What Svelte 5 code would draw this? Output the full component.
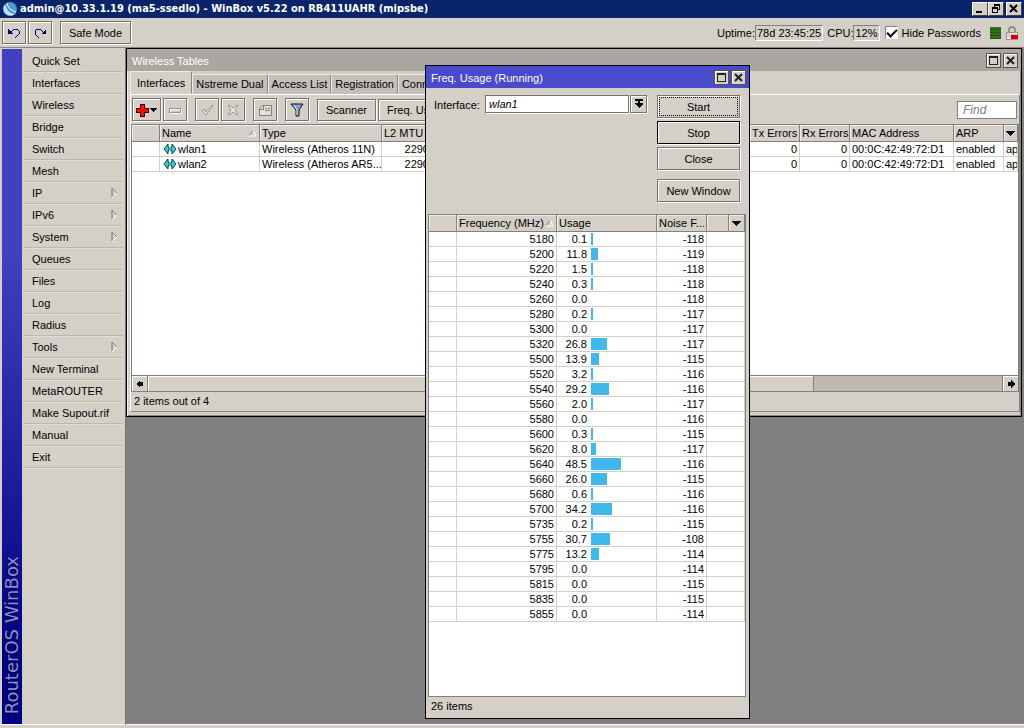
<script>
  const menu = [
    { label: 'Quick Set' },
    { label: 'Interfaces' },
    { label: 'Wireless' },
    { label: 'Bridge' },
    { label: 'Switch' },
    { label: 'Mesh' },
    { label: 'IP', sub: true },
    { label: 'IPv6', sub: true },
    { label: 'System', sub: true },
    { label: 'Queues' },
    { label: 'Files' },
    { label: 'Log' },
    { label: 'Radius' },
    { label: 'Tools', sub: true },
    { label: 'New Terminal' },
    { label: 'MetaROUTER' },
    { label: 'Make Supout.rif' },
    { label: 'Manual' },
    { label: 'Exit' }
  ];

  const tabs = ['Interfaces', 'Nstreme Dual', 'Access List', 'Registration', 'Connect List'];

  const wlans = [
    { name: 'wlan1', type: 'Wireless (Atheros 11N)', mtu: 2290, tx: 0, rx: 0, mac: '00:0C:42:49:72:D1', arp: 'enabled', mode: 'ap' },
    { name: 'wlan2', type: 'Wireless (Atheros AR5...', mtu: 2290, tx: 0, rx: 0, mac: '00:0C:42:49:72:D1', arp: 'enabled', mode: 'ap' }
  ];

  // frequency, usage %, noise floor
  const freqs = [
    [5180, 0.1, -118],
    [5200, 11.8, -119],
    [5220, 1.5, -118],
    [5240, 0.3, -118],
    [5260, 0, -118],
    [5280, 0.2, -117],
    [5300, 0, -117],
    [5320, 26.8, -117],
    [5500, 13.9, -115],
    [5520, 3.2, -116],
    [5540, 29.2, -116],
    [5560, 2, -117],
    [5580, 0, -116],
    [5600, 0.3, -115],
    [5620, 8, -117],
    [5640, 48.5, -116],
    [5660, 26, -115],
    [5680, 0.6, -116],
    [5700, 34.2, -116],
    [5735, 0.2, -115],
    [5755, 30.7, -108],
    [5775, 13.2, -114],
    [5795, 0, -114],
    [5815, 0, -115],
    [5835, 0, -115],
    [5855, 0, -114]
  ];

  let activeTab = 'Interfaces';
  let iface = 'wlan1';
  let find = '';
  let hidePasswords = true;

  function barWidth(usage) {
    return usage ? Math.max(2, Math.round(usage * 0.61)) : 0;
  }
</script>

<div class="app">
  <header class="titlebar">
    <svg class="smooth" width="16" height="16" viewBox="0 0 16 16">
      <circle cx="8" cy="8" r="7" fill="#4f9bd6" />
      <path d="M3 3a8 8 0 0 0 11 9a7 7 0 0 1-11-9z" fill="#b9ddf5" />
      <path d="M5 2q1 7 9 9M3 5q2 7 8 9" fill="none" stroke="#fff" />
    </svg>
    <h1>admin@10.33.1.19 (ma5-ssedlo) - WinBox v5.22 on RB411UAHR (mipsbe)</h1>
    <div class="sys">
      <button aria-label="Minimize"><svg width="10" height="10" viewBox="0 0 10 10"><path d="M1 7h6v2H1z" /></svg></button>
      <button aria-label="Restore">
        <svg width="10" height="10" viewBox="0 0 10 10"><path d="M3 0h6v6H7V5h1V2H4v1H3zM1 3h6v6H1zM2 5v3h4V5z" fill-rule="evenodd" /></svg>
      </button>
      <button class="quit" aria-label="Quit"><svg class="smooth" width="10" height="10" viewBox="0 0 10 10"><path d="M1 1l7 7M8 1L1 8" stroke="#000" stroke-width="2" /></svg></button>
    </div>
  </header>

  <div class="toolbar">
    <button class="btn sq" aria-label="Undo">
      <svg width="14" height="14" viewBox="0 0 14 14"><path d="M1 3v5h5z" fill="#00007c" /><path d="M4 6l3-3h3l2 2v3l-3 3H8" fill="none" stroke="#00007c" /></svg>
    </button>
    <button class="btn sq" aria-label="Redo">
      <svg width="14" height="14" viewBox="0 0 14 14"><path d="M13 3v5H8z" fill="#00007c" /><path d="M10 6L7 3H4L2 5v3l3 3h1" fill="none" stroke="#00007c" /></svg>
    </button>
    <button class="btn safe">Safe Mode</button>
    <div class="status">
      <span>Uptime:</span><span class="sunken">78d 23:45:25</span>
      <span class="cpu">CPU:</span><span class="sunken">12%</span>
      <label><input type="checkbox" bind:checked={hidePasswords} />Hide Passwords</label>
      <span class="load"></span>
      <svg width="14" height="16" viewBox="0 0 14 16">
        <path d="M4 7V4l2-2h2l2 2v3" fill="none" stroke="#98948d" stroke-width="2" />
        <path d="M1 7h11v7H1z" fill="#f0ede6" stroke="#98948d" />
        <path d="M2 9h9M2 11h5" stroke="#c4c0b8" />
        <path d="M6 10h7v4H6z" fill="#d40000" />
      </svg>
    </div>
  </div>

  <div class="work">
    <aside>
      <div class="brand"><span>RouterOS WinBox</span></div>
      <nav>
        {#each menu as item}
          <button>
            {item.label}
            {#if item.sub}
              <svg class="smooth" width="7" height="12" viewBox="0 0 7 12"><path d="M1 10V1" stroke="#77736d" /><path d="M1 1l5 5" stroke="#8f8b84" /><path d="M6 6l-5 5" stroke="#fff" /></svg>
            {/if}
          </button>
        {/each}
      </nav>
    </aside>

    <main>
      <section class="window tables">
        <div class="caption">
          <h2>Wireless Tables</h2>
          {@render winButtons()}
        </div>
        <div class="tabs">
          {#each tabs as tab}
            <button class:active={tab === activeTab} on:click={() => (activeTab = tab)}>{tab}</button>
          {/each}
        </div>
        <div class="page">
          <div class="tools">
            <button class="btn add" aria-label="Add">
              <svg width="24" height="14" viewBox="0 0 24 14"><path d="M5 1h4v4h4v4H9v4H5V9H1V5h4z" fill="#f01010" stroke="#400" /><path d="M15 5h7l-3 4h-1z" /></svg>
            </button>
            <button class="btn sq" aria-label="Remove">
              <svg width="14" height="14" viewBox="0 0 14 14"><path d="M2 6h11v4H2z" fill="none" stroke="#fff" /><path d="M1 5h11v4H1z" fill="none" stroke="#96928b" /></svg>
            </button>
            <button class="btn sq gap" aria-label="Enable">
              <svg class="smooth" width="14" height="14" viewBox="0 0 14 14"><path d="M2 8l2-2 2 3 6-7 1 1-7 9z" fill="#e9e6df" stroke="#96928b" /></svg>
            </button>
            <button class="btn sq" aria-label="Disable">
              <svg class="smooth" width="14" height="14" viewBox="0 0 14 14"><path d="M2 3l1-1 4 3 4-3 1 1-3 4 3 4-1 1-4-3-4 3-1-1 3-4z" fill="#e9e6df" stroke="#96928b" /></svg>
            </button>
            <button class="btn sq gap" aria-label="Comment">
              <svg width="14" height="14" viewBox="0 0 14 14"><path d="M1 6l4-4h8v10H1z" fill="#e3dfd7" stroke="#85817a" /><path d="M1 6h4V2M7 5h2M10 5h2M7 7h5" fill="none" stroke="#85817a" /></svg>
            </button>
            <button class="btn sq gap" aria-label="Filter">
              <svg class="smooth" width="14" height="14" viewBox="0 0 14 14"><path d="M1 1h12L9 7v6H6V7z" fill="#8ba0d8" stroke="#111" /><path d="M4 2l3 5v5" fill="none" stroke="#d8e2fb" /></svg>
            </button>
            <button class="btn gap scan">Scanner</button>
            <button class="btn scan">Freq. Usage</button>
            <input class="find" aria-label="Find" placeholder="Find" bind:value={find} />
          </div>

          <div class="grid">
            <table>
              <colgroup>
                <col class="w28" /><col class="w100" /><col class="w122" /><col class="w50" /><col />
                <col class="w50" /><col class="w50" /><col class="w104" /><col class="w50" /><col class="w14" />
              </colgroup>
              <thead>
                <tr>
                  <th></th>
                  <th><span class="sort">Name {@render sortMark()}</span></th>
                  <th>Type</th>
                  <th>L2 MTU</th>
                  <th></th>
                  <th>Tx Errors</th>
                  <th>Rx Errors</th>
                  <th>MAC Address</th>
                  <th>ARP</th>
                  <th class="pick">{@render pickButton()}</th>
                </tr>
              </thead>
              <tbody>
                {#each wlans as w}
                  <tr>
                    <td></td>
                    <td>
                      <span class="iface">
                        <svg class="smooth" width="14" height="12" viewBox="0 0 14 12"><path d="M1 6l4-5v3h1v4H5v3zM13 6L9 1v3H8v4h1v3z" fill="#25d5d5" stroke="#064747" /></svg>{w.name}
                      </span>
                    </td>
                    <td>{w.type}</td>
                    <td class="num">{w.mtu}</td>
                    <td></td>
                    <td class="num">{w.tx}</td>
                    <td class="num">{w.rx}</td>
                    <td>{w.mac}</td>
                    <td>{w.arp}</td>
                    <td>{w.mode}</td>
                  </tr>
                {/each}
              </tbody>
            </table>
          </div>

          <div class="scroll">
            <button aria-label="Scroll left"><svg width="8" height="8" viewBox="0 0 8 8"><path d="M0 4l4-4v2h3v4H4v2z" /></svg></button>
            <div class="track"><div class="thumb"></div></div>
            <button aria-label="Scroll right"><svg width="8" height="8" viewBox="0 0 8 8"><path d="M8 4L4 0v2H1v4h3v2z" /></svg></button>
          </div>
          <footer>2 items out of 4</footer>
        </div>
      </section>

      <section class="window usage">
        <div class="caption">
          <h2>Freq. Usage (Running)</h2>
          {@render winButtons()}
        </div>
        <div class="form">
          <label for="iface">Interface:</label>
          <input id="iface" bind:value={iface} />
          <button class="drop" aria-label="Choose interface">
            <svg width="8" height="10" viewBox="0 0 8 10"><path d="M0 0h8v2H0zM3 2h2v2h3v1L4 9 0 5V4h3z" /></svg>
          </button>
          <div class="actions">
            <button class="btn focus">Start</button>
            <button class="btn default">Stop</button>
            <button class="btn">Close</button>
            <button class="btn apart">New Window</button>
          </div>
        </div>
        <div class="grid">
          <table>
            <colgroup>
              <col class="w28" /><col class="w100" /><col class="w100" /><col class="w50" /><col /><col class="w16" />
            </colgroup>
            <thead>
              <tr>
                <th></th>
                <th><span class="sort">Frequency (MHz) {@render sortMark()}</span></th>
                <th>Usage</th>
                <th>Noise F...</th>
                <th></th>
                <th class="pick">{@render pickButton()}</th>
              </tr>
            </thead>
            <tbody>
              {#each freqs as [freq, usage, noise]}
                <tr>
                  <td></td>
                  <td class="num">{freq}</td>
                  <td>
                    <span class="meter"><span class="value">{usage.toFixed(1)}</span><span class="bar" style="width: {barWidth(usage)}px"></span></span>
                  </td>
                  <td class="num">{noise}</td>
                  <td colspan="2"></td>
                </tr>
              {/each}
            </tbody>
          </table>
        </div>
        <footer>{freqs.length} items</footer>
      </section>
    </main>
  </div>
</div>

{#snippet winButtons()}
  <button class="win" aria-label="Maximize"><svg width="9" height="9" viewBox="0 0 9 9"><path d="M0 0h9v9H0zM1 2v6h7V2z" fill-rule="evenodd" fill="#222" /></svg></button>
  <button class="win" aria-label="Close window"><svg class="smooth" width="9" height="9" viewBox="0 0 9 9"><path d="M1 1l7 7M8 1L1 8" stroke="#222" stroke-width="2" /></svg></button>
{/snippet}

{#snippet sortMark()}
  <svg class="smooth" width="8" height="7" viewBox="0 0 8 7"><path d="M0 6l4-6" stroke="#8a867f" /><path d="M4 0l3 6H0" fill="none" stroke="#fff" /></svg>
{/snippet}

{#snippet pickButton()}
  <button aria-label="Columns"><svg width="9" height="5" viewBox="0 0 9 5"><path d="M0 0h9L5 5H4z" /></svg></button>
{/snippet}

<style>
  :global(body) {
    margin: 0;
    background: #d4d0c8;
  }

  .app {
    display: flex;
    flex-direction: column;
    min-height: 100vh;
    font: 11px/14px "Liberation Sans", Arial, sans-serif;
    color: #000;
    background: #d4d0c8;
  }

  .app :global(*) {
    box-sizing: border-box;
  }

  button,
  input {
    font: inherit;
    color: inherit;
    margin: 0;
    padding: 0;
    border: 0;
    border-radius: 0;
    background: none;
  }

  svg {
    display: block;
    flex: none;
    shape-rendering: crispEdges;
  }

  svg.smooth {
    shape-rendering: auto;
  }

  h1,
  h2 {
    margin: 0;
    flex: 1;
    font-size: 11px;
    font-weight: normal;
    white-space: nowrap;
  }

  /* main title bar */
  .titlebar {
    display: flex;
    align-items: center;
    gap: 2px;
    height: 18px;
    padding: 0 2px;
    color: #fff;
    background: #0a246a;
  }

  h1 {
    font: bold 11px/16px "DejaVu Sans Condensed", "DejaVu Sans", sans-serif;
  }

  .sys {
    display: flex;
  }

  .sys button {
    display: flex;
    align-items: center;
    justify-content: center;
    width: 16px;
    height: 14px;
    background: #d4d0c8;
    border: 1px solid;
    border-color: #fff #404040 #404040 #fff;
  }

  .sys .quit {
    margin-left: 2px;
  }

  /* toolbar */
  .toolbar {
    display: flex;
    align-items: center;
    gap: 2px;
    height: 30px;
    padding: 0 5px 0 2px;
    border-bottom: 1px solid #8a867f;
  }

  .btn {
    display: flex;
    align-items: center;
    justify-content: center;
    height: 23px;
    padding: 0 8px;
    white-space: nowrap;
    border: 1px solid #77746e;
    box-shadow: inset 1px 1px #fff, 1px 1px #fff;
  }

  .btn.sq {
    width: 24px;
    padding: 0;
  }

  .safe {
    width: 71px;
    margin-left: 6px;
  }

  .status {
    display: flex;
    align-items: center;
    margin-left: auto;
  }

  .sunken {
    padding: 0 1px;
    border: 1px solid;
    border-color: #808080 #fff #fff #808080;
  }

  .cpu {
    margin-left: 4px;
  }

  .status label {
    display: flex;
    align-items: center;
    gap: 4px;
    margin-left: 5px;
  }

  input[type='checkbox'] {
    appearance: none;
    width: 13px;
    height: 13px;
    background: #fff;
    border: 1px solid;
    border-color: #808080 #eee #eee #808080;
  }

  input[type='checkbox']:checked::before {
    content: '';
    display: block;
    width: 8px;
    height: 4px;
    margin: 2px 1px;
    border: solid #000;
    border-width: 0 0 2px 2px;
    transform: rotate(-45deg);
  }

  .load {
    width: 11px;
    height: 12px;
    margin: 0 4px 0 9px;
    background: repeating-linear-gradient(#35701c 0 2px, #28560f 2px 3px);
  }

  /* menu */
  .work {
    display: flex;
    flex: 1;
    border-bottom: 3px solid #d4d0c8;
    box-shadow: inset 0 -1px #fff;
  }

  aside {
    display: flex;
    flex: none;
    width: 126px;
    padding: 1px 2px 1px;
    border-right: 1px solid #77746e;
  }

  .brand {
    display: flex;
    justify-content: center;
    width: 20px;
    padding-bottom: 10px;
    background: linear-gradient(#4040c0 30%, #000080 90%);
  }

  .brand span {
    align-self: flex-end;
    writing-mode: vertical-rl;
    transform: rotate(180deg);
    font: 18px/20px "DejaVu Sans", sans-serif;
    white-space: nowrap;
    color: #8c8ccc;
    text-shadow: -1px -1px 1px #000040;
  }

  nav {
    flex: 1;
    padding: 1px 0 0 2px;
  }

  nav button {
    display: flex;
    align-items: center;
    justify-content: space-between;
    width: 100%;
    height: 22px;
    padding: 0 5px 0 8px;
    text-align: left;
    border-bottom: 1px solid #bcb8b0;
    box-shadow: 0 1px #e0ddd6;
  }

  main {
    position: relative;
    flex: 1;
    min-width: 0;
    overflow: hidden;
    margin-bottom: 1px;
    background: #808080;
  }

  /* inner windows */
  .window {
    position: absolute;
    display: flex;
    flex-direction: column;
    background: #d4d0c8;
    border: 1px solid #000;
    overflow: hidden;
  }

  .tables {
    top: 0;
    left: 0;
    right: 2px;
    height: 369px;
    box-shadow: inset 1px 1px #f4f2ee, inset -1px -1px #8a867f;
  }

  .usage {
    top: 17px;
    left: 299px;
    bottom: 5px;
    width: 325px;
    padding: 0 3px 2px 2px;
  }

  .caption {
    display: flex;
    align-items: center;
    gap: 2px;
    height: 22px;
    flex: none;
    padding: 0 3px 0 5px;
    color: #fff;
    background: #aaa7a0;
  }

  .caption h2 {
    padding-top: 2px;
  }

  .usage .caption {
    margin: 0 -3px 0 -2px;
    background: #4a4bcc;
  }

  .win {
    display: flex;
    align-items: center;
    justify-content: center;
    width: 15px;
    height: 15px;
    background: #d4d0c8;
    border: 1px solid #55524d;
    box-shadow: inset 1px 1px #fff;
  }

  .tabs {
    display: flex;
    align-items: flex-end;
    height: 23px;
    flex: none;
    padding-left: 3px;
  }

  .tabs button {
    height: 20px;
    padding: 0 3px;
    white-space: nowrap;
    background: #c4c0b9;
    border: 1px solid;
    border-color: #eeece6 #8a867f #c4c0b9 #eeece6;
  }

  .tabs .active {
    height: 23px;
    padding: 0 6px;
    background: #d4d0c8;
    border-bottom-color: #d4d0c8;
  }

  .page {
    display: flex;
    flex-direction: column;
    flex: 1;
    margin: 0 1px 4px 3px;
    border: 1px solid;
    border-color: #fff #8a867f #8a867f #fff;
  }

  .tools {
    display: flex;
    align-items: center;
    gap: 2px;
    height: 29px;
    flex: none;
    padding: 0 2px 0 1px;
  }

  .add {
    width: 29px;
    padding: 0;
  }

  .gap {
    margin-left: 6px;
  }

  .scan {
    height: 22px;
  }

  .find {
    width: 60px;
    height: 18px;
    margin-left: auto;
    padding: 0 5px;
    font-size: 12px;
    font-style: italic;
    background: #fff;
    border: 1px solid #808080;
  }

  .find::placeholder {
    color: #808080;
    opacity: 1;
  }

  .grid {
    flex: 1;
    overflow: hidden;
    background: #fff;
    border: 1px solid #808080;
  }

  table {
    width: 100%;
    table-layout: fixed;
    border-collapse: separate;
    border-spacing: 0;
  }

  .w14 { width: 14px; }
  .w16 { width: 16px; }
  .w28 { width: 28px; }
  .w50 { width: 50px; }
  .w100 { width: 100px; }
  .w104 { width: 104px; }
  .w122 { width: 122px; }

  th,
  td {
    padding: 0 0 0 2px;
    text-align: left;
    font-weight: normal;
    white-space: nowrap;
    overflow: hidden;
    border: solid #d4d0c8;
    border-width: 0 1px 1px 0;
  }

  th {
    height: 17px;
    background: #d4d0c8;
    border-color: #808080;
    box-shadow: inset 1px 1px #f0eee9;
  }

  td {
    height: 15px;
  }

  .num {
    padding-right: 2px;
    text-align: right;
  }

  .sort,
  .iface,
  .meter {
    display: flex;
    align-items: center;
  }

  .sort {
    justify-content: space-between;
    padding-right: 2px;
  }

  .pick {
    padding: 0;
  }

  .pick button {
    display: flex;
    align-items: center;
    justify-content: center;
    width: 100%;
    height: 14px;
  }

  .iface {
    gap: 1px;
    padding-left: 1px;
  }

  .value {
    width: 28px;
    text-align: right;
  }

  .bar {
    height: 12px;
    margin-left: 4px;
    background: #41b8ec;
  }

  .scroll {
    display: flex;
    height: 16px;
    flex: none;
    border: solid #808080;
    border-width: 0 1px 1px;
  }

  .scroll button {
    display: flex;
    align-items: center;
    justify-content: center;
    width: 15px;
    box-shadow: inset 1px 1px #fff;
  }

  .track {
    flex: 1;
    background: #bebab3;
    border: solid #808080;
    border-width: 0 1px;
  }

  .thumb {
    width: 78%;
    height: 100%;
    background: #d4d0c8;
    border-right: 1px solid #808080;
    box-shadow: inset 1px 1px #fff;
  }

  footer {
    height: 19px;
    flex: none;
    padding: 2px 3px 0;
  }

  /* frequency usage form */
  .form {
    display: flex;
    align-items: flex-start;
    height: 126px;
    flex: none;
    padding: 7px 6px 0;
  }

  .form label {
    width: 51px;
    padding-top: 3px;
  }

  .form input {
    flex: 1;
    min-width: 0;
    height: 18px;
    padding: 0 3px;
    font-style: italic;
    background: #fff;
    border: 1px solid #77746e;
    box-shadow: 1px 1px #fff;
  }

  .drop {
    display: flex;
    align-items: center;
    justify-content: center;
    width: 17px;
    height: 18px;
    margin: 0 10px 0 1px;
    border: 1px solid #77746e;
    box-shadow: inset 1px 1px #fff, 1px 1px #fff;
  }

  .actions {
    display: flex;
    flex-direction: column;
    gap: 3px;
    width: 83px;
  }

  .actions .focus {
    outline: 1px dotted #000;
    outline-offset: -3px;
  }

  .actions .default {
    border-color: #000;
  }

  .actions .apart {
    margin-top: 6px;
  }
</style>
